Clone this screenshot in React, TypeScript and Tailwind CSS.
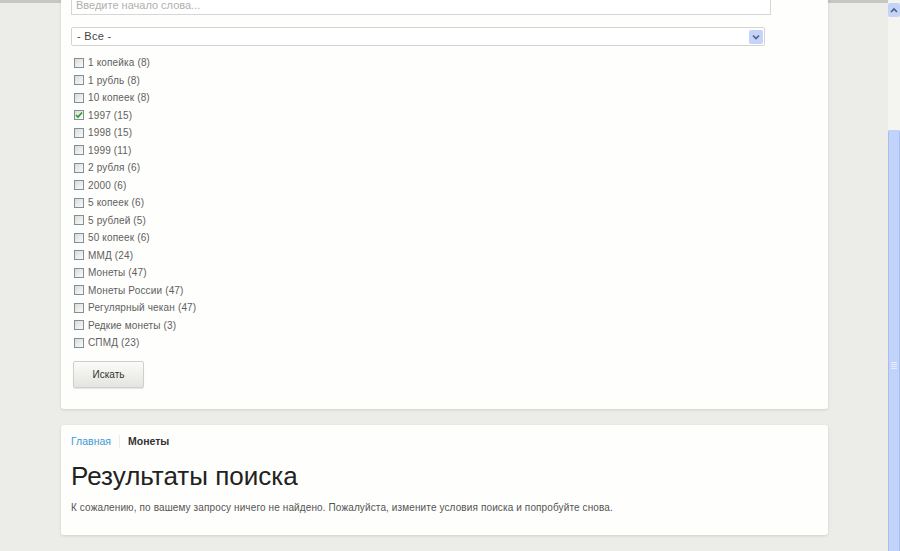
import React from 'react';

interface Option {
  label: string;
  count: number;
  checked?: boolean;
}

const options: Option[] = [
  { label: '1 копейка', count: 8 },
  { label: '1 рубль', count: 8 },
  { label: '10 копеек', count: 8 },
  { label: '1997', count: 15, checked: true },
  { label: '1998', count: 15 },
  { label: '1999', count: 11 },
  { label: '2 рубля', count: 6 },
  { label: '2000', count: 6 },
  { label: '5 копеек', count: 6 },
  { label: '5 рублей', count: 5 },
  { label: '50 копеек', count: 6 },
  { label: 'ММД', count: 24 },
  { label: 'Монеты', count: 47 },
  { label: 'Монеты России', count: 47 },
  { label: 'Регулярный чекан', count: 47 },
  { label: 'Редкие монеты', count: 3 },
  { label: 'СПМД', count: 23 }
];

function Checkbox({ checked }: { checked?: boolean }) {
  return (
    <span className="flex h-[10px] w-[10px] items-center justify-center border border-[#7f8f9f] bg-gradient-to-br from-[#dcdcd6] to-[#fafaf8]">
      {checked && (
        <svg width="8" height="8" viewBox="0 0 8 8">
          <path d="M1 4 L3 6 L7 1.5" fill="none" stroke="#21a121" strokeWidth="1.6" />
        </svg>
      )}
    </span>
  );
}

function Scrollbar() {
  return (
    <div className="flex w-[12px] flex-col bg-[#f4f4f0] pt-[3px]">
      <div className="flex h-[14px] w-[12px] items-center justify-center rounded-[2px] bg-[#c4d3f8]">
        <svg width="8" height="6" viewBox="0 0 8 6">
          <path d="M1 5 L4 2 L7 5" fill="none" stroke="#4d6185" strokeWidth="1.6" />
        </svg>
      </div>
      <div className="h-[113px]" />
      <div className="flex flex-1 justify-center rounded-t-[2px] border-x border-[#aabdf0] bg-[#c1d2fb]">
        <div className="flex flex-col gap-[1px] pt-[232px]">
          <span className="h-[1px] w-[6px] bg-[#e8eefe]" />
          <span className="h-[1px] w-[6px] bg-[#e8eefe]" />
          <span className="h-[1px] w-[6px] bg-[#e8eefe]" />
          <span className="h-[1px] w-[6px] bg-[#e8eefe]" />
        </div>
      </div>
    </div>
  );
}

export default function App() {
  return (
    <div className="flex h-[551px] w-[900px] overflow-hidden bg-[#ecece8] font-['Liberation_Sans',Arial,sans-serif]">
      <div className="flex flex-1 flex-col">
        <div className="h-[3px] bg-[#c6c6c2]" />
        <div className="pl-[61px] pr-[60px]">
          <div className="-mt-[23px] rounded-[3px] bg-[#fefefc] px-[10px] pb-[21px] pt-[15px] shadow-[0_1px_3px_rgba(0,0,0,0.12)]">
            <div className="mr-[47px] h-[20px] border border-[#d6d6d2] bg-white px-[4px] text-[11px] leading-[18px] text-[#b0b0ae]">
              Введите начало слова...
            </div>
            <div className="mt-[12px] mr-[53px] flex h-[19px] items-center justify-between rounded-[2px] border border-[#d4d4d0] bg-white pl-[5px] pr-[1px] text-[11px] tracking-[0.3px] text-[#444]">
              <span>- Все -</span>
              <span className="flex h-[14px] w-[14px] items-center justify-center rounded-[2px] bg-[#c4d3f8]">
                <svg width="8" height="6" viewBox="0 0 8 6">
                  <path d="M1 1.5 L4 4.5 L7 1.5" fill="none" stroke="#4d6185" strokeWidth="1.6" />
                </svg>
              </span>
            </div>
            <div className="mt-[8px] flex flex-col pl-[3px]">
              {options.map((o) => (
                <label key={o.label} className="flex h-[17.5px] items-center gap-[4px] text-[10px] tracking-[0.15px] text-[#606060]">
                  <Checkbox checked={o.checked} />
                  <span>
                    {o.label} ({o.count})
                  </span>
                </label>
              ))}
            </div>
            <button className="mt-[9px] ml-[2px] h-[27px] w-[71px] rounded-[2px] border border-[#cfcfcb] bg-gradient-to-b from-[#fbfbf9] to-[#e4e4e0] text-[10px] text-[#333] shadow-[0_1px_1px_rgba(0,0,0,0.1)]">
              Искать
            </button>
          </div>
          <div className="mt-[16px] rounded-[3px] bg-[#fefefc] px-[10px] pb-[20px] pt-[10px] shadow-[0_1px_3px_rgba(0,0,0,0.12)]">
            <div className="flex items-center text-[10.5px] leading-[13px]">
              <a className="text-[#3d9ad6]">Главная</a>
              <span className="mx-[8px] h-[13px] w-[1px] bg-[#ececea]" />
              <span className="font-bold text-[#333]">Монеты</span>
            </div>
            <h1 className="mt-[12px] text-[26px] leading-[32px] text-[#222]">Результаты поиска</h1>
            <p className="mt-[8px] text-[10px] tracking-[0.12px] text-[#555]">
              К сожалению, по вашему запросу ничего не найдено. Пожалуйста, измените условия поиска и попробуйте снова.
            </p>
          </div>
        </div>
      </div>
      <Scrollbar />
    </div>
  );
}
